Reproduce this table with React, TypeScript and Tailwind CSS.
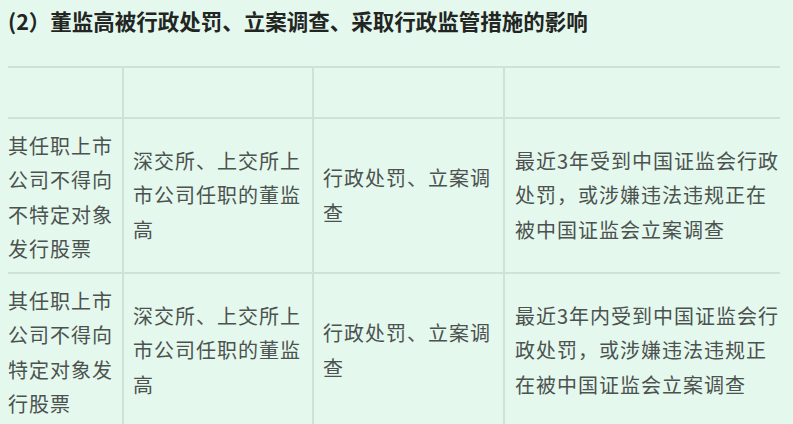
const rows = [
  {
    subject: '其任职上市公司不得向不特定对象发行股票',
    scope: '深交所、上交所上市公司任职的董监高',
    type: '行政处罚、立案调查',
    rule: '最近3年受到中国证监会行政处罚，或涉嫌违法违规正在被中国证监会立案调查',
  },
  {
    subject: '其任职上市公司不得向特定对象发行股票',
    scope: '深交所、上交所上市公司任职的董监高',
    type: '行政处罚、立案调查',
    rule: '最近3年内受到中国证监会行政处罚，或涉嫌违法违规正在被中国证监会立案调查',
  },
];

const font = "[font-family:'Noto_Sans_CJK_SC','Noto_Sans',sans-serif]";

export default function App() {
  return (
    <div className={`w-[793px] h-[424px] overflow-hidden bg-[#e4f8ee] ${font}`}>
      {/* 标题 */}
      <h2 className="pl-[8px] pt-[6px] text-[21.5px] leading-[30px] font-bold text-[#222522]">
        (2）董监高被行政处罚、立案调查、采取行政监管措施的影响
      </h2>

      {/* 表格 */}
      <table className="ml-[8px] mt-[30px] w-[772px] table-fixed border-collapse text-[20px] leading-[34.5px] tracking-[1px] text-[#4c524e]">
        <colgroup>
          <col className="w-[115px]" />
          <col className="w-[190px]" />
          <col className="w-[191px]" />
          <col className="w-[276px]" />
        </colgroup>
        <tbody>
          <tr className="h-[51px] border-t-2 border-b-2 border-[#cfe2d7]">
            <td className="border-r-2 border-[#cfe2d7]" />
            <td className="border-r-2 border-[#cfe2d7]" />
            <td className="border-r-2 border-[#cfe2d7]" />
            <td />
          </tr>
          {rows.map((r, i) => (
            <tr key={i} className="h-[155px] border-b-2 border-[#cfe2d7] align-middle">
              <td className="border-r-2 border-[#cfe2d7] pr-[8px] pt-[4px]">{r.subject}</td>
              <td className="border-r-2 border-[#cfe2d7] px-[9px]">{r.scope}</td>
              <td className="border-r-2 border-[#cfe2d7] px-[9px]">{r.type}</td>
              <td className="pl-[10px] pr-0">
                <span className="inline-block w-[268px]">{r.rule}</span>
              </td>
            </tr>
          ))}
        </tbody>
      </table>
    </div>
  );
}
